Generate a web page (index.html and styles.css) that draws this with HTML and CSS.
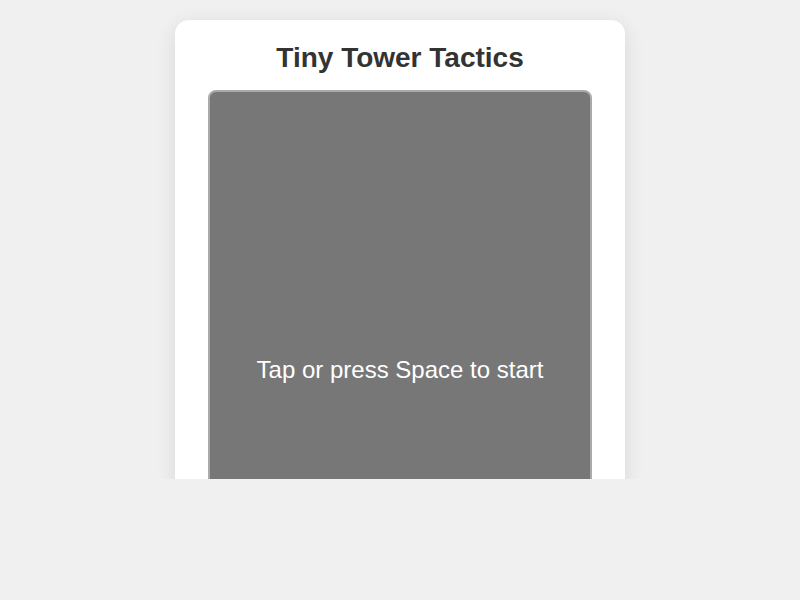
FILE: index.html
```html
<!DOCTYPE html>
<html lang="en">
<head>
  <meta charset="UTF-8">
  <meta name="viewport" content="width=device-width, initial-scale=1.0">
  <title>Tiny Tower Tactics</title>
  <link rel="stylesheet" href="styles.css">
</head>
<body>
  <div class="viewport">
    <div class="game-container">
      <h1>Tiny Tower Tactics</h1>
      <div class="game" id="game">
        <div class="overlay" id="overlay">Tap or press Space to start</div>
      </div>
    </div>
  </div>
</body>
</html>
```

FILE: styles.css
```css
html, body {
  margin: 0;
  padding: 0;
  background-color: #f0f0f0;
  font-family: "Liberation Sans", Arial, sans-serif;
}

.viewport {
  height: 479px;
  overflow: hidden;
  display: flex;
  justify-content: center;
  padding-top: 20px;
  box-sizing: border-box;
}

.game-container {
  width: 450px;
  height: 640px;
  box-sizing: border-box;
  background-color: #fff;
  border-radius: 14px;
  padding: 21px 33px;
  box-shadow: 0 4px 20px rgba(0, 0, 0, 0.1);
  flex-shrink: 0;
}

h1 {
  margin: 0 0 15px;
  font-size: 28px;
  line-height: 34px;
  text-align: center;
  color: #333;
}

.game {
  height: 560px;
  box-sizing: border-box;
  border: 2px solid #aaa;
  border-radius: 8px;
  background-color: #777;
  display: flex;
  align-items: center;
  justify-content: center;
}

.overlay {
  color: #fff;
  font-size: 24px;
}
```
